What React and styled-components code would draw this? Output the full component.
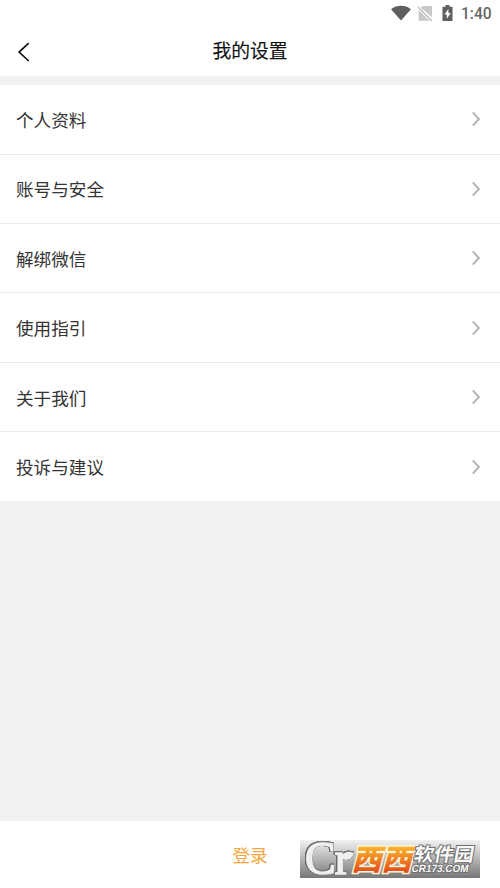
import React from 'react';
import styled, { createGlobalStyle } from 'styled-components';

const GlobalStyle = createGlobalStyle`
  body {
    margin: 0;
    background: #fff;
    font-family: 'Noto Sans CJK SC', sans-serif;
  }
`;

const Page = styled.div`
  display: flex;
  flex-direction: column;
  width: 500px;
  height: 888px;
  overflow: hidden;
  background: #fff;
`;

const StatusBar = styled.div`
  display: flex;
  align-items: center;
  height: 27px;
  flex-shrink: 0;
  padding-left: 391px;

  svg {
    flex-shrink: 0;
    margin-bottom: 1px;
  }
`;

const Clock = styled.span`
  margin-left: 6px;
  padding-top: 2px;
  font: 500 15.6px/27px Roboto, sans-serif;
  color: #666;
`;

const Header = styled.header`
  display: grid;
  grid-template-columns: 48px 1fr 48px;
  align-items: center;
  height: 49px;
  flex-shrink: 0;
`;

const BackButton = styled.button`
  display: flex;
  align-items: center;
  height: 100%;
  padding: 0 0 0 17px;
  border: none;
  background: none;
`;

const Title = styled.h1`
  margin: 0;
  padding-bottom: 3px;
  font-size: 18.8px;
  line-height: 28px;
  font-weight: 400;
  color: #111;
  text-align: center;
  -webkit-text-stroke: 0.15px #111;
`;

const Content = styled.main`
  flex: 1;
  padding-top: 9.3px;
  background: #f2f2f2;
`;

const List = styled.ul`
  margin: 0;
  padding: 0;
  list-style: none;
  background: #fff;
`;

const Row = styled.li`
  display: flex;
  align-items: center;
  justify-content: space-between;
  box-sizing: border-box;
  height: 69.4px;
  padding: 0 19px 0 16px;
  border-bottom: 1px solid #ebebeb;
  font-size: 17.6px;
  color: #333;

  &:last-child {
    height: 68.7px;
    border-bottom: none;
  }
`;

const Footer = styled.footer`
  position: relative;
  display: flex;
  justify-content: center;
  height: 67px;
  flex-shrink: 0;
  background: #fff;
`;

const LoginButton = styled.button`
  height: 66px;
  padding: 0;
  border: none;
  background: none;
  font: 400 17.6px 'Noto Sans CJK SC', sans-serif;
  color: #f5a640;
`;

const Badge = styled.div`
  position: absolute;
  left: 300px;
  bottom: 10px;
  width: 180px;
  height: 38px;
  background: linear-gradient(#f2f2f2, #777);

  svg {
    display: block;
    overflow: visible;
  }
`;

const Monogram = styled.g`
  fill: #efefef;
  stroke: #efefef;
  stroke-width: 1.7;
  stroke-linejoin: round;
  filter: drop-shadow(0.7px 0 0 #666) drop-shadow(-0.7px 0 0 #666) drop-shadow(0 0.7px 0 #666)
    drop-shadow(0 -0.7px 0 #777);
`;

const items = ['个人资料', '账号与安全', '解绑微信', '使用指引', '关于我们', '投诉与建议'];

const StatusIcons = () => (
  <svg width="64" height="20" viewBox="0 0 64 20">
    <path d="M0 6.3C5.5 1.7 14.5 1.7 20 6.3L10 17.4Z" fill="#5f5f5f" />
    <path d="M31.5 3H41V14.2L29.8 4.7Z" fill="#c9c9c9" />
    <path d="M27.6 7L38.6 17.8H27.6Z" fill="#c9c9c9" />
    <path d="M27 4L41 18" stroke="#bdbdbd" strokeWidth="1.4" />
    <path d="M54.5 2H58.5V3.7H61.5V18H51.5V3.7H54.5Z" fill="#5f5f5f" />
    <path d="M57.4 6L53.4 11.6H55.8V15.7L59.7 10H57.4Z" fill="#fff" />
  </svg>
);

const BackIcon = () => (
  <svg width="14" height="20" viewBox="0 0 14 20">
    <path d="M11.7 1.2L2.1 10L11.7 19" fill="none" stroke="#111" strokeWidth="1.7" />
  </svg>
);

const Chevron = () => (
  <svg width="10" height="16" viewBox="0 0 10 16">
    <path d="M1.8 1.4L7.9 8L1.8 14.6" fill="none" stroke="#b5b5b5" strokeWidth="2" />
  </svg>
);

const SiteLogo = () => (
  <svg width="180" height="38" viewBox="0 0 180 38">
    <defs>
      <linearGradient id="orange" x1="0" y1="0" x2="0" y2="1">
        <stop offset="0.25" stopColor="#f9b32c" />
        <stop offset="0.85" stopColor="#e34f1d" />
      </linearGradient>
    </defs>
    <Monogram>
      <text x="5" y="33.5" fontFamily="'Liberation Serif', serif" fontSize="46" letterSpacing="-1">
        Cr
      </text>
      <path d="M42 17C44 13.5 48 12 53 13.3C50.5 19 45 21 42 17Z" />
    </Monogram>
    <g
      transform="translate(51 31) skewX(-15)"
      fill="url(#orange)"
      stroke="#fff3d8"
      strokeWidth="3"
      paintOrder="stroke"
      fontFamily="'Noto Sans CJK SC', sans-serif"
      fontWeight="900"
      fontSize="29"
    >
      <text x="0" y="-1" textLength="60" lengthAdjust="spacingAndGlyphs">
        西西
      </text>
    </g>
    <g fill="#fafafa" stroke="#707070" strokeWidth="2" paintOrder="stroke">
      <text
        transform="translate(113 20.5) skewX(-10)"
        fontFamily="'Noto Sans CJK SC', sans-serif"
        fontSize="18.5"
        fontWeight="700"
        textLength="60"
        lengthAdjust="spacingAndGlyphs"
      >
        软件园
      </text>
      <text
        transform="translate(111 31.5) skewX(-10)"
        fontFamily="'Liberation Sans', sans-serif"
        fontSize="10.5"
        fontWeight="700"
        textLength="57"
        lengthAdjust="spacingAndGlyphs"
      >
        CR173.COM
      </text>
    </g>
  </svg>
);

const App = () => (
  <>
    <GlobalStyle />
    <Page>
      <StatusBar>
        <StatusIcons />
        <Clock>1:40</Clock>
      </StatusBar>
      <Header>
        <BackButton>
          <BackIcon />
        </BackButton>
        <Title>我的设置</Title>
      </Header>
      <Content>
        <List>
          {items.map((item) => (
            <Row key={item}>
              {item}
              <Chevron />
            </Row>
          ))}
        </List>
      </Content>
      <Footer>
        <LoginButton>登录</LoginButton>
        <Badge>
          <SiteLogo />
        </Badge>
      </Footer>
    </Page>
  </>
);

export default App;
